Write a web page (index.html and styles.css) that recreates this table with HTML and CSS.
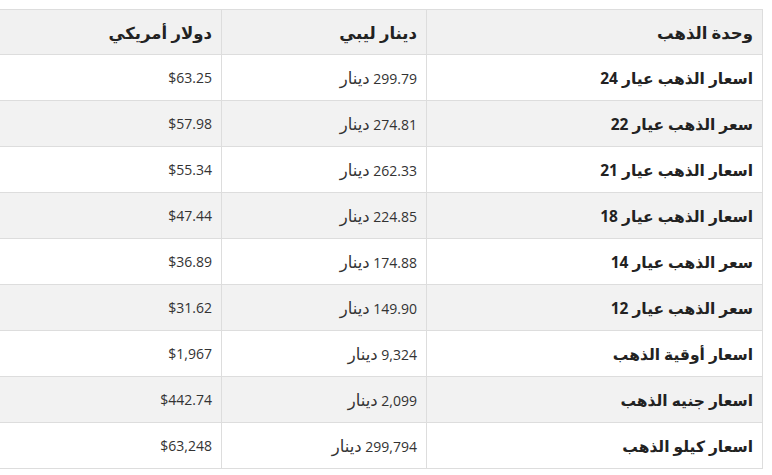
FILE: index.html
```html
<!DOCTYPE html>
<html lang="ar" dir="rtl">
<head>
<meta charset="utf-8">
<link rel="stylesheet" href="styles.css">
</head>
<body>
<div class="wrap">
<table class="gold">
  <thead>
    <tr><th class="c-unit">وحدة الذهب</th><th class="c-lyd">دينار ليبي</th><th class="c-usd">دولار أمريكي</th></tr>
  </thead>
  <tbody>
    <tr><td class="unit">اسعار الذهب عيار 24</td><td>299.79 <span class="cur">دينار</span></td><td>$63.25</td></tr>
    <tr><td class="unit">سعر الذهب عيار 22</td><td>274.81 <span class="cur">دينار</span></td><td>$57.98</td></tr>
    <tr><td class="unit">اسعار الذهب عيار 21</td><td>262.33 <span class="cur">دينار</span></td><td>$55.34</td></tr>
    <tr><td class="unit">اسعار الذهب عيار 18</td><td>224.85 <span class="cur">دينار</span></td><td>$47.44</td></tr>
    <tr><td class="unit">سعر الذهب عيار 14</td><td>174.88 <span class="cur">دينار</span></td><td>$36.89</td></tr>
    <tr><td class="unit">سعر الذهب عيار 12</td><td>149.90 <span class="cur">دينار</span></td><td>$31.62</td></tr>
    <tr><td class="unit">اسعار أوقية الذهب</td><td>9,324 <span class="cur">دينار</span></td><td>$1,967</td></tr>
    <tr><td class="unit">اسعار جنيه الذهب</td><td>2,099 <span class="cur">دينار</span></td><td>$442.74</td></tr>
    <tr><td class="unit">اسعار كيلو الذهب</td><td>299,794 <span class="cur">دينار</span></td><td>$63,248</td></tr>
  </tbody>
</table>
</div>
</body>
</html>
```
FILE: styles.css
```css
html, body {
  margin: 0;
  padding: 0;
  background: #fff;
}
body {
  font-family: "Open Sans", "DejaVu Sans", sans-serif;
  color: #333;
}
.wrap {
  padding-top: 9px;
  width: 763px;
  margin-left: 0;
  margin-right: auto;
}
.gold {
  width: 763px;
  border-collapse: collapse;
  table-layout: fixed;
  direction: rtl;
  border-top: 1px solid #ddd;
  border-right: 1px solid #ddd;
  border-bottom: 1px solid #ddd;
}
.gold th, .gold td {
  box-sizing: border-box;
  text-align: right;
  padding: 0 9px 0 8px;
  height: 46px;
  border-bottom: 1px solid #ddd;
  border-left: 1px solid #ddd;
  font-size: 14px;
  vertical-align: middle;
}
.gold th:last-child, .gold td:last-child {
  border-left: none;
}
.gold th {
  background: #f1f1f1;
  font-weight: bold;
  font-size: 16.5px;
  color: #222;
  height: 45px;
}
.c-unit { width: 336px; }
.c-lyd { width: 205px; }
.gold td.unit {
  font-weight: bold;
  font-size: 15.5px;
  color: #222;
}
.cur {
  font-size: 16.5px;
}
.gold tbody tr:nth-child(even) td {
  background: #f2f2f2;
}
```
